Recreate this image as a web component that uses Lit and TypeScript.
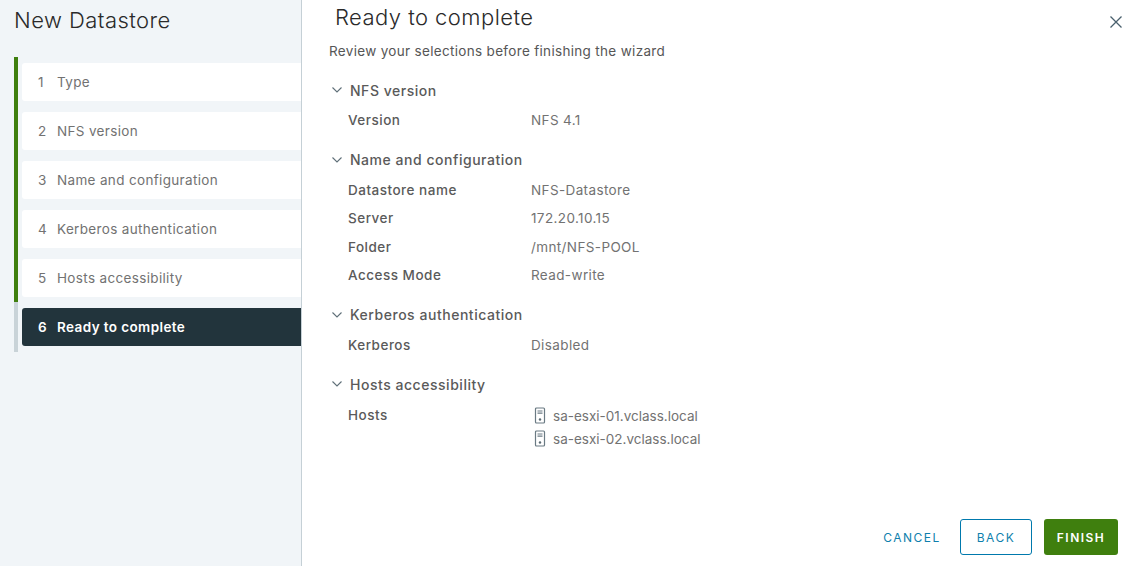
import { LitElement, html, css } from "lit";
import { customElement } from "lit/decorators.js";

const steps = ["Type", "NFS version", "Name and configuration", "Kerberos authentication", "Hosts accessibility", "Ready to complete"];

type Row = { k: string; v?: string; hosts?: string[] };
const sections: { title: string; rows: Row[] }[] = [
  { title: "NFS version", rows: [{ k: "Version", v: "NFS 4.1" }] },
  {
    title: "Name and configuration",
    rows: [
      { k: "Datastore name", v: "NFS-Datastore" },
      { k: "Server", v: "172.20.10.15" },
      { k: "Folder", v: "/mnt/NFS-POOL" },
      { k: "Access Mode", v: "Read-write" },
    ],
  },
  { title: "Kerberos authentication", rows: [{ k: "Kerberos", v: "Disabled" }] },
  { title: "Hosts accessibility", rows: [{ k: "Hosts", hosts: ["sa-esxi-01.vclass.local", "sa-esxi-02.vclass.local"] }] },
];

@customElement("app-root")
export class AppRoot extends LitElement {
  static styles = css`
    :host { display: block; width: 1135px; height: 566px; overflow: hidden; font-family: Inter, "Open Sans", sans-serif; background: #fff; }
    .page { display: flex; height: 566px; }
    .side { box-sizing: border-box; width: 302px; flex: none; background: #f1f5f8; border-right: 1px solid #c5d0d6; padding: 6px 0 0 14px; }
    .side h2 { margin: 0; font-size: 22px; line-height: 28px; font-weight: 300; letter-spacing: 0.45px; color: #2a2a2a; }
    .track { margin-top: 23px; border-left: 4px solid #c9d3d8; position: relative; padding: 6px 0 6px 4px; display: flex; flex-direction: column; gap: 11px; }
    .done { position: absolute; left: -4px; top: 0; width: 4px; height: 245px; background: #3f7f0e; }
    .step { height: 38px; display: flex; align-items: center; background: #fff; border-radius: 3px 0 0 3px; color: #727272; font-size: 13.5px; letter-spacing: 0.34px; }
    .step .n { width: 35px; box-sizing: border-box; padding-left: 16px; }
    .step.active { background: #22343c; color: #fff; font-weight: 600; letter-spacing: 0.4px; }
    .main { flex: 1; position: relative; padding: 3px 0 0 27px; box-sizing: border-box; min-width: 0; }
    .main h1 { margin: 0 0 0 6px; font-size: 22px; line-height: 28px; font-weight: 300; letter-spacing: 0.45px; color: #2a2a2a; }
    .sub { margin-top: 11px; font-size: 13.5px; line-height: 18px; letter-spacing: 0.32px; color: #565656; }
    .close { position: absolute; top: 15px; right: 12px; width: 14px; height: 14px; }
    .sec { margin-top: 11px; }
    .sub + svg + .sec { margin-top: 20px; }
    .head { display: flex; align-items: center; height: 20px; font-size: 14px; font-weight: 500; letter-spacing: 0.53px; color: #5a5a5a; }
    .head svg { width: 12px; height: 12px; margin: 0 7px 0 2px; }
    .rows { margin-top: 10px; padding-left: 19px; display: flex; flex-direction: column; }
    .row { display: grid; grid-template-columns: 183px 1fr; min-height: 28.5px; align-items: start; font-size: 13.5px; line-height: 20px; }
    .row.with-hosts { margin-top: 1px; }
    .k { font-weight: 500; color: #5a5a5a; letter-spacing: 0.5px; }
    .v { color: #727272; letter-spacing: 0.38px; }
    .hosts { margin-top: -1px; margin-left: -1px; }
    .host { display: flex; align-items: center; height: 23px; gap: 7px; padding-left: 4px; color: #727272; }
    .host svg { width: 12px; height: 17px; flex: none; }
    .foot { position: absolute; right: 17px; bottom: 11px; display: flex; align-items: center; }
    .btn { box-sizing: border-box; height: 36px; display: flex; align-items: center; justify-content: center; font-size: 12px; font-weight: 500; letter-spacing: 1.45px; border-radius: 3px; }
    .cancel { color: #0f7fad; width: 72px; margin-right: 12px; margin-left: -4px; font-weight: 400; }
    .back { color: #0f7fad; border: 1px solid #0079ad; width: 72px; margin-right: 12px; font-weight: 400; }
    .finish { background: #3f7f0e; color: #fff; width: 74px; font-weight: 600; }
  `;

  render() {
    return html`<div class="page">
      <aside class="side">
        <h2>New Datastore</h2>
        <div class="track">
          <div class="done"></div>
          ${steps.map((s, i) => html`<div class="step ${i === 5 ? "active" : ""}"><span class="n">${i + 1}</span><span>${s}</span></div>`)}
        </div>
      </aside>
      <main class="main">
        <h1>Ready to complete</h1>
        <div class="sub">Review your selections before finishing the wizard</div>
        <svg class="close" viewBox="0 0 14 14"><path d="M1.5 1.5l11 11M12.5 1.5l-11 11" stroke="#49606d" stroke-width="1.3" fill="none"/></svg>
        ${sections.map(
          (sec) => html`<section class="sec">
            <div class="head">
              <svg viewBox="0 0 12 12"><path d="M1.5 3.5l4.5 4.5 4.5-4.5" stroke="#5f6f78" stroke-width="1.1" fill="none"/></svg>
              ${sec.title}
            </div>
            <div class="rows">
              ${sec.rows.map(
                (r) => html`<div class="row ${r.hosts ? "with-hosts" : ""}">
                  <div class="k">${r.k}</div>
                  ${r.hosts
                    ? html`<div class="hosts">${r.hosts.map(
                        (h) => html`<div class="host">
                          <svg viewBox="0 0 12 17"><rect x="1.5" y="1" width="9" height="15" rx="1" fill="none" stroke="#6a7a83" stroke-width="1.2"/><path d="M3.5 4h5M3.5 6.2h5" stroke="#6a7a83" stroke-width="1.2"/><circle cx="6" cy="12.5" r="1.2" fill="#5a6a73"/></svg>
                          <span>${h}</span>
                        </div>`
                      )}</div>`
                    : html`<div class="v">${r.v}</div>`}
                </div>`
              )}
            </div>
          </section>`
        )}
        <div class="foot">
          <div class="btn cancel">CANCEL</div>
          <div class="btn back">BACK</div>
          <div class="btn finish">FINISH</div>
        </div>
      </main>
    </div>`;
  }
}
